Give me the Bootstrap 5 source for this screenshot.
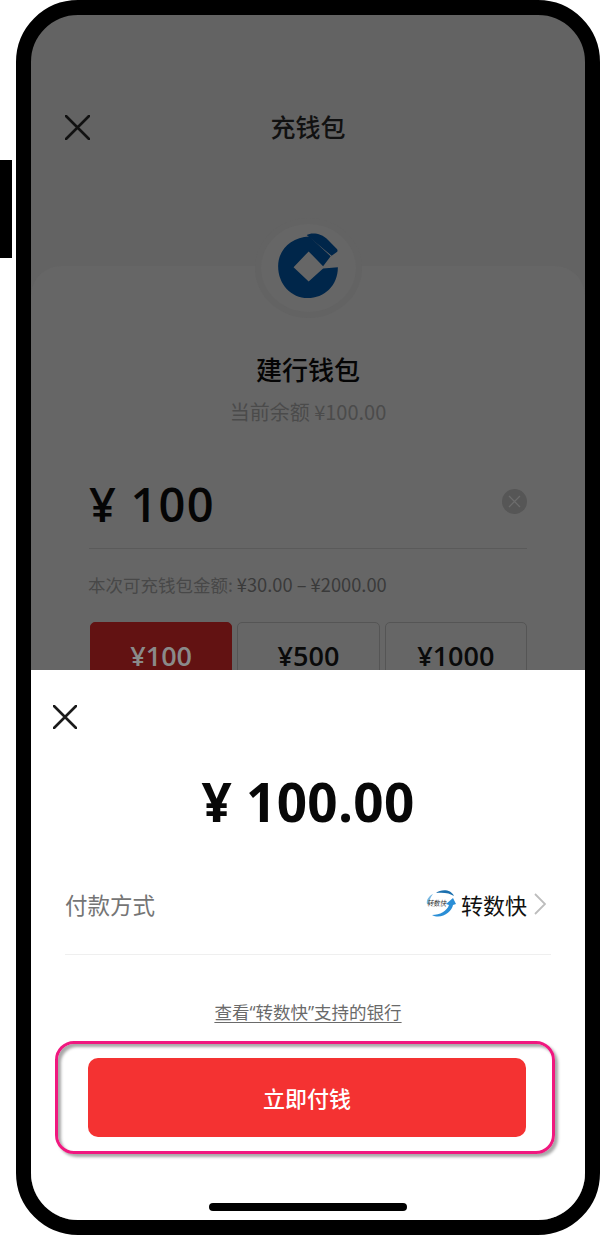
<!DOCTYPE html>
<html lang="zh">
<head>
<meta charset="utf-8">
<title>充钱包</title>
<link href="https://cdn.jsdelivr.net/npm/bootstrap@5.3.0/dist/css/bootstrap.min.css" rel="stylesheet">
<style>
html,body{margin:0;background:#fff;height:1236px;overflow:hidden}
body{font-family:"Noto Sans CJK SC","Open Sans",sans-serif}
.side-key{width:12px;height:98px;background:#000;margin-top:160px;margin-right:4px;flex:none}
.phone{width:584px;height:1235px;border:15px solid #000;border-radius:62px;background:#636363;overflow:hidden;position:relative;flex:none}
.page-top{height:251px;padding:96px 34px 0 34px}
.top-title{font-size:25px;font-weight:500;line-height:30px;color:#111;width:100%;text-align:center}
.close-top{left:0;top:4px}
.wallet-card{display:flow-root;height:954px;background:#666;border-radius:30px 30px 0 0;padding:0 58px}
.logo-ring{width:107px;height:100px;border-radius:50%;background:#636363;margin:-48px auto 0}
.logo-inner{width:95px;height:88px;border-radius:50%;background:#666}
.logo-mark{margin-top:-6px;margin-left:-1px}
.wallet-name{font-size:26px;font-weight:500;line-height:34px;color:#050505;margin-top:34px}
.wallet-bal{font-size:20px;line-height:28px;color:#4b4b4b;margin-top:12px}
.amount-row{height:99px;margin-top:24px;padding-top:10px;border-bottom:1px solid #5a5a5a}
.amount-txt{font-family:"Open Sans",sans-serif;font-size:47px;font-weight:600;line-height:58px;color:#050505;letter-spacing:1.2px}
.clear-dot{width:25px;height:25px;border-radius:50%;background:#565656;margin-top:-6px}
.limit-txt{font-size:17.5px;line-height:24px;color:#484848;margin-top:23px;margin-left:-1px}
.limit-txt b{font-weight:400;color:#3a3a3a;font-size:18.3px}
.tile-row{gap:5px;margin-top:25px;margin-left:1px}
.tile{flex:1 1 0;height:70px;border:1px solid #555;border-radius:5px;font-family:"Open Sans",sans-serif;font-size:27px;font-weight:600;color:#0a0a0a;line-height:66px;text-align:center}
.tile.on{background:#621212;border-color:#621212;color:#8a8a8a}
.sheet{position:absolute;left:0;right:0;bottom:0;height:550px;background:#fff;padding:0 34px}
.sheet-close{padding:35px 0 0 0;margin-left:-12px;height:58px}
.sheet-close svg{display:block}
.sheet-amt{font-family:"Open Sans",sans-serif;font-size:53px;font-weight:700;line-height:66px;color:#080808;text-align:center;margin-top:41px;letter-spacing:.3px}
.pay-row{height:80px;margin-top:40px;border-bottom:1px solid #efefef;padding-bottom:22px}
.pay-label{font-size:22.5px;line-height:32px;color:#757575}
.pay-side{margin-right:5px}
.pay-val{font-size:22px;line-height:32px;color:#111}
.chev{margin-left:7px}
.help-link{display:block;font-family:"Open Sans","Noto Sans CJK SC",sans-serif;font-size:17.5px;line-height:24px;color:#6a6a6a;text-decoration:underline;text-align:center;margin-top:45px;text-underline-offset:3px}
.focus-box{margin:17px -4px 0 -10px;height:113px;border:3px solid #f0187f;border-radius:19px;padding:14px 26px 13px 30px;box-shadow:3px 3px 3px #a8a8a8,inset 3px 3px 3px #a8a8a8}
.pay-btn{display:block;width:100%;height:79px;background:#f43232;border:0;border-radius:10px;color:#fff;font-size:22px;font-weight:500;line-height:79px;padding:0;text-align:center}
.home-bar{position:absolute;left:178px;bottom:9px;width:198px;height:8px;border-radius:4px;background:#000}
.mini-logo{position:relative;width:30px;height:28px;flex:none;margin-right:5px}
.mini-logo span{position:absolute;left:1px;top:8px;font-size:7.5px;line-height:10px;font-style:italic;color:#333;white-space:nowrap;transform:scaleX(.85);transform-origin:left}
</style>
</head>
<body>
<div class="d-flex align-items-start">
  <div class="side-key"></div>
  <div class="phone">
    <div class="page-top d-flex align-items-start">
      <div class="position-relative w-100">
        <svg class="position-absolute close-top" width="25" height="25" viewBox="0 0 25 25"><path d="M1 1 24 24M24 1 1 24" stroke="#111" stroke-width="2.6" fill="none" stroke-linecap="round"/></svg>
        <div class="top-title">充钱包</div>
      </div>
    </div>
    <div class="wallet-card">
      <div class="logo-ring d-flex align-items-center justify-content-center">
        <div class="logo-inner d-flex align-items-center justify-content-center">
          <svg class="logo-mark" width="60" height="65" viewBox="110 64 182 198"><path fill="#00264a" d="M205 75 270 135 247 165 203 120 157 168 203 212 247 172 292 168C292 225 250 262 200 262 150 262 110 220 110 165 110 115 150 78 205 75Z"/><path fill="#00264a" d="M197 70C210 62 240 62 262 85L289 113Q293 118 289 122L273 133Z"/></svg>
        </div>
      </div>
      <div class="wallet-name text-center">建行钱包</div>
      <div class="wallet-bal text-center">当前余额 ¥100.00</div>
      <div class="amount-row d-flex justify-content-between align-items-center">
        <div class="amount-txt">¥ 100</div>
        <div class="clear-dot d-flex align-items-center justify-content-center"><svg width="13" height="13" viewBox="0 0 13 13"><path d="M1 1 12 12M12 1 1 12" stroke="#6c6c6c" stroke-width="1.3"/></svg></div>
      </div>
      <div class="limit-txt">本次可充钱包金额: <b>¥30.00 – ¥2000.00</b></div>
      <div class="tile-row d-flex">
        <div class="tile on">¥100</div>
        <div class="tile">¥500</div>
        <div class="tile">¥1000</div>
      </div>
    </div>
    <div class="sheet">
      <div class="sheet-close"><svg width="24" height="24" viewBox="0 0 24 24"><path d="M1 1 23 23M23 1 1 23" stroke="#1a1a1a" stroke-width="2.6" stroke-linecap="round" fill="none"/></svg></div>
      <div class="sheet-amt">¥ 100.00</div>
      <div class="pay-row d-flex justify-content-between align-items-center">
        <div class="pay-label">付款方式</div>
        <div class="pay-side d-flex align-items-center">
          <div class="mini-logo">
            <svg width="30" height="28" viewBox="0 0 30 28"><path d="M10 3C15-1 25-1 28 6 24 3 17 2 10 3Z" fill="#1b6fae"/><path d="M27 8 30 14 27 15C26 22 15 30 6 25 14 25 21 21 23 15L20 14Z" fill="#2a8ed6"/><path d="M1 14C0 10 3 6 7 4 4 8 3 11 3 14Z" fill="#78b8e2"/></svg>
            <span>转数快</span>
          </div>
          <span class="pay-val">转数快</span>
          <svg class="chev" width="12" height="22" viewBox="0 0 12 22"><path d="M1 1 11 11 1 21" stroke="#bdbdbd" stroke-width="1.8" fill="none"/></svg>
        </div>
      </div>
      <a class="help-link">查看“转数快”支持的银行</a>
      <div class="focus-box"><button class="pay-btn" type="button">立即付钱</button></div>
    </div>
    <div class="home-bar"></div>
  </div>
</div>
</body>
</html>
